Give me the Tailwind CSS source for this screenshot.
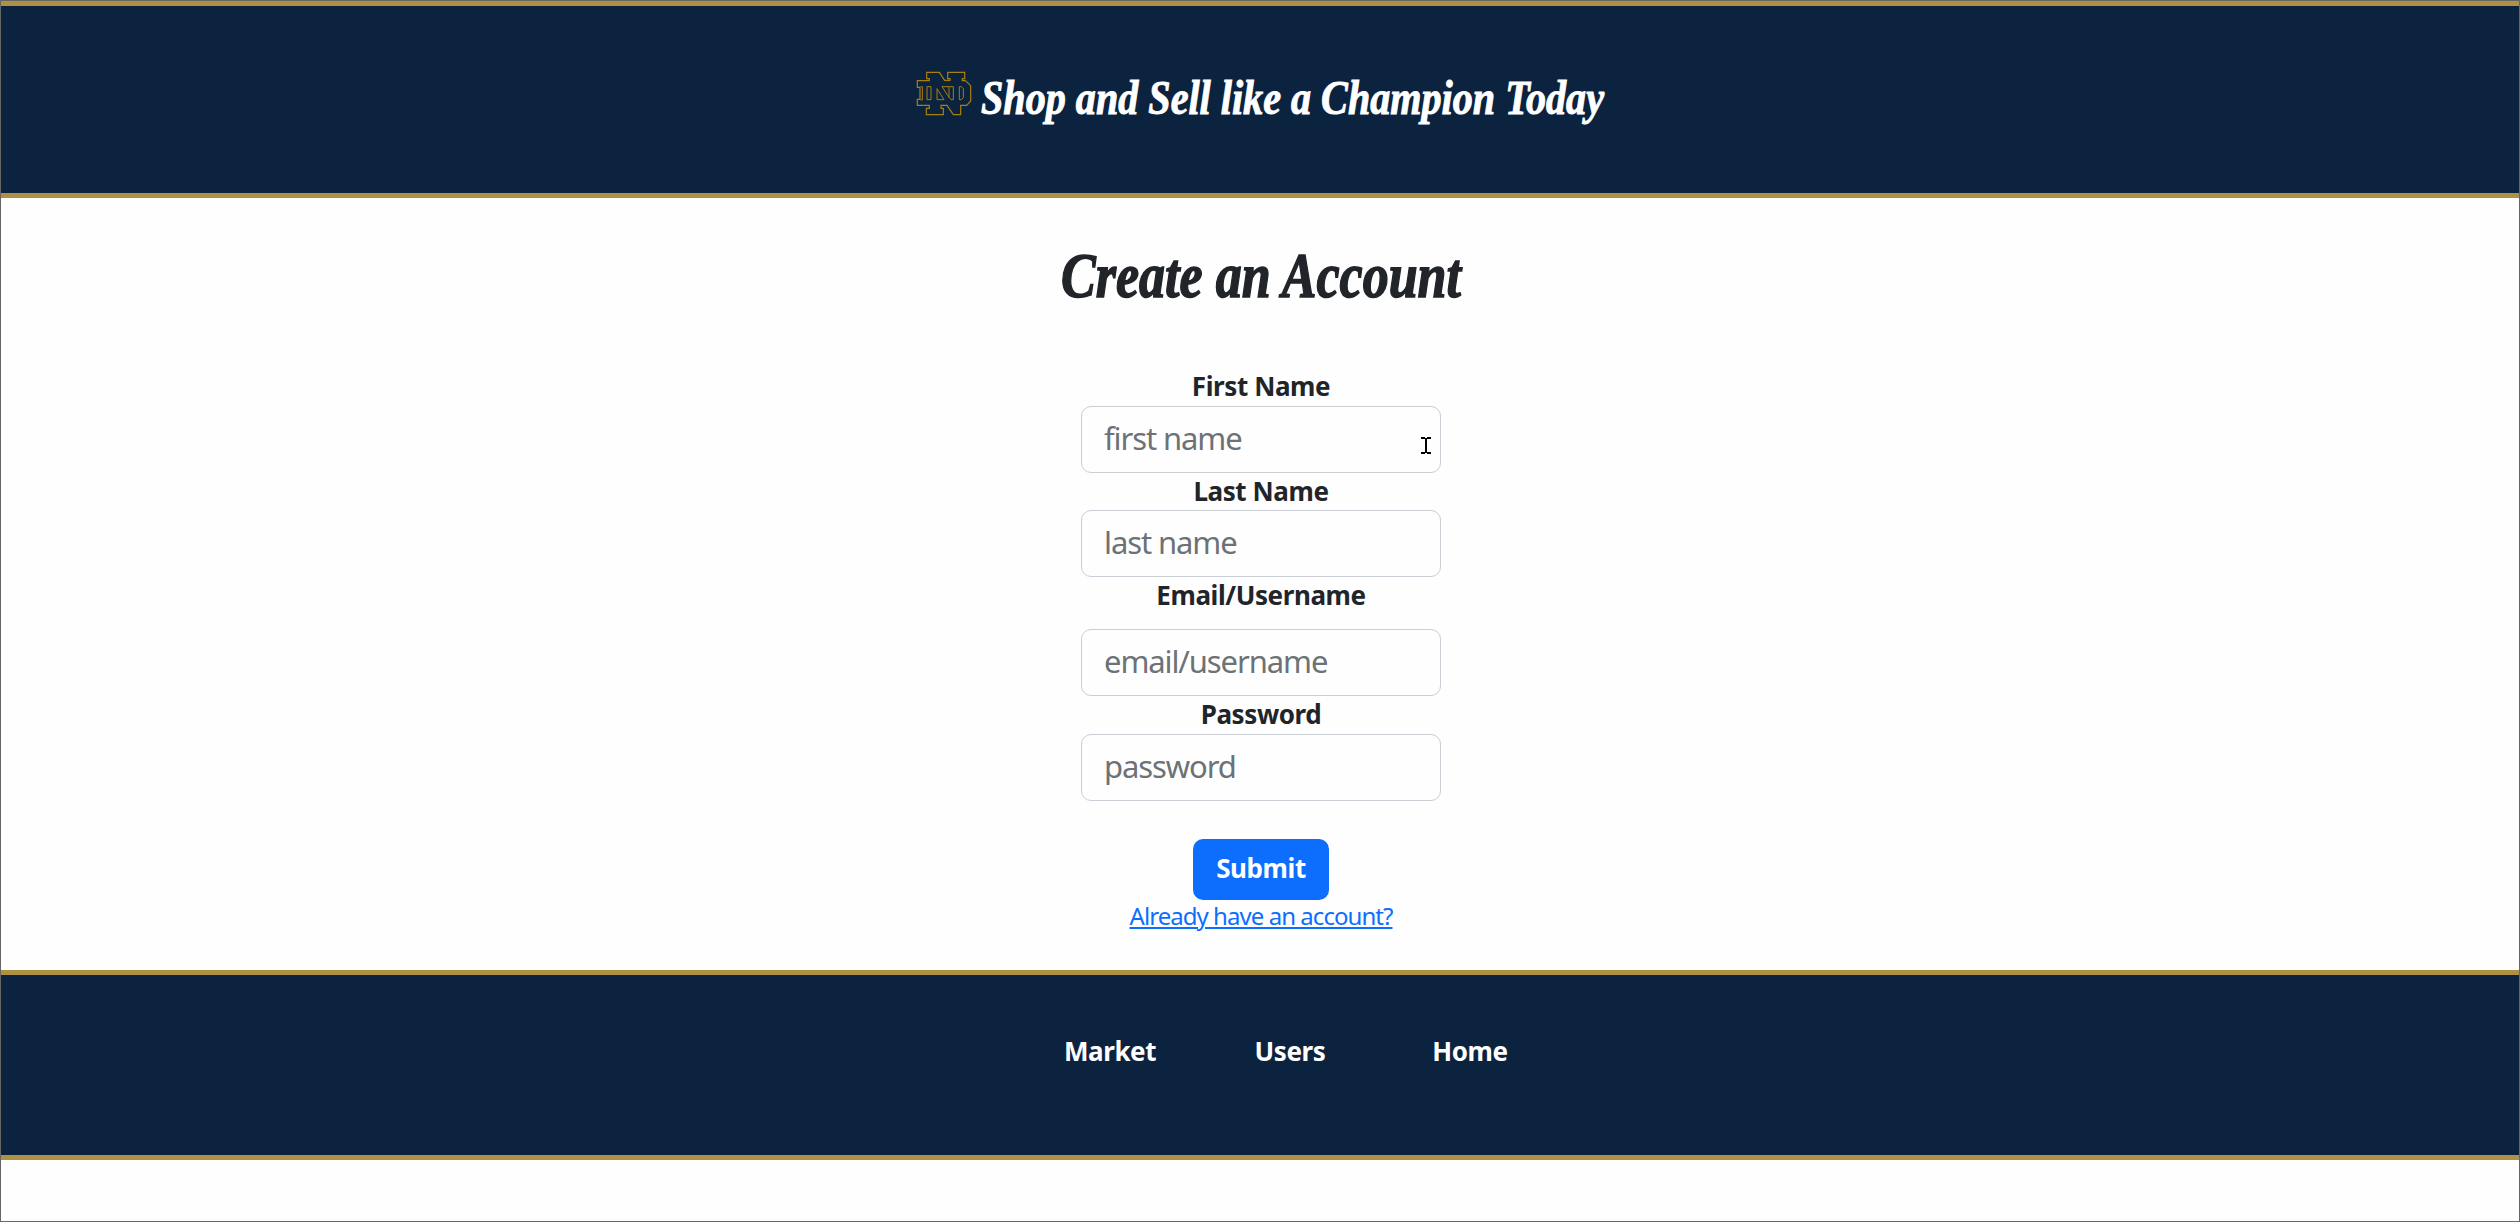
<!DOCTYPE html>
<html lang="en">
<head>
<meta charset="utf-8">
<title>Create an Account</title>
<script src="https://cdn.jsdelivr.net/npm/@tailwindcss/browser@4"></script>
</head>
<body class="h-[1222px] overflow-hidden border border-[#666666] bg-[#fefefe] font-['Noto_Sans',sans-serif] text-[#212529]">
  <header class="flex h-[197px] items-start border-y-5 border-[#ae9142] bg-[#0c2340] pl-[914px] pt-[64px]">
    <svg class="h-[48px] w-[58px] shrink-0" viewBox="45 60 174 144" fill="none" stroke="#a67f0c" stroke-width="3.6" role="img" aria-label="ND">
      <path d="M80 67H118L134 91H150V86H143V67H194V86H187V92H196L212 107V153L200 166H182V194H160L141 166H123V175H130V194H79V175H88V166H52V148H60V112H52V92H88V86H80Z"/>
      <path d="M62 110H67V150H62M81 110H93V149H81ZM111 116L132 149H111ZM126 110L147 142V110ZM148 110H160V149H153L148 142M178 110H184L190 116V143L184 149H178Z" stroke-width="3"/>
    </svg>
    <svg class="h-[90px] w-[660px] shrink-0 overflow-visible" viewBox="973 70 660 90" role="heading" aria-level="1">
      <text x="981" y="114" textLength="623" lengthAdjust="spacingAndGlyphs" class="fill-white stroke-white stroke-1 font-['Liberation_Serif',serif] text-[48px] font-bold italic">Shop and Sell like a Champion Today</text>
    </svg>
  </header>
  <main class="flex h-[772px] flex-col items-center pt-[32px] pl-[2px]">
    <svg class="h-[100px] w-[440px] shrink-0 overflow-visible" viewBox="1041 230 440 100" role="heading" aria-level="2">
      <text x="1061" y="297" textLength="400" lengthAdjust="spacingAndGlyphs" class="fill-[#212529] stroke-[#212529] stroke-[1.5px] font-['Liberation_Serif',serif] text-[64px] font-bold italic">Create an Account</text>
    </svg>
    <form class="flex w-[360px] flex-col items-center text-[26px] tracking-[-0.4px]">
      <label class="mt-[38px] h-[38px] leading-[36px] font-bold">First Name</label>
      <div class="relative h-[67px] w-full">
        <input placeholder="first name" class="h-full w-full rounded-[10px] border border-[#c8ced4] px-[22px] pb-[3px] text-[31px] tracking-[-1.1px] placeholder:text-[#6c7275]">
        <svg class="absolute top-[31px] left-[340px] h-[17px] w-[10px]" viewBox="0 0 10 17" fill="#000" shape-rendering="crispEdges"><path d="M0 0H4V1H6V0H10V2H6V15H10V17H6V16H4V17H0V15H4V2H0Z"/></svg>
      </div>
      <label class="h-[37px] leading-[36px] font-bold">Last Name</label>
      <input placeholder="last name" class="h-[67px] w-full rounded-[10px] border border-[#c8ced4] px-[22px] pb-[3px] text-[31px] tracking-[-1.1px] placeholder:text-[#6c7275]">
      <label class="h-[52px] leading-[36px] font-bold">Email/Username</label>
      <input placeholder="email/username" class="h-[67px] w-full rounded-[10px] border border-[#c8ced4] px-[22px] pb-[3px] text-[31px] tracking-[-1.1px] placeholder:text-[#6c7275]">
      <label class="h-[38px] leading-[36px] font-bold">Password</label>
      <input placeholder="password" class="h-[67px] w-full rounded-[10px] border border-[#c8ced4] px-[22px] pb-[3px] text-[31px] tracking-[-1.1px] placeholder:text-[#6c7275]">
      <button type="button" class="mt-[38px] h-[61px] w-[136px] rounded-[10px] bg-[#0d6efd] pb-[2px] font-bold tracking-[-0.4px] text-white">Submit</button>
    </form>
    <a href="#" class="h-[36px] text-[24px] leading-[31px] tracking-[-0.95px] text-[#0d6efd] underline decoration-2 underline-offset-[2px]">Already have an account?</a>
  </main>
  <footer class="h-[190px] border-y-5 border-[#ae9142] bg-[#0c2340] pt-[57px]">
    <nav class="ml-[1019px] grid w-[540px] grid-cols-3 text-center text-[26px] leading-[38px] font-bold tracking-[-0.4px] text-white">
      <a href="#">Market</a>
      <a href="#">Users</a>
      <a href="#">Home</a>
    </nav>
  </footer>
</body>
</html>
